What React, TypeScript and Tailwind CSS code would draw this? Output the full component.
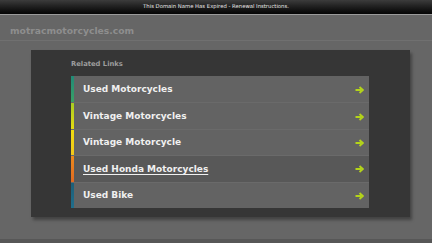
const links = [
  { label: "Used Motorcycles", bar: "bg-gradient-to-b from-[#1f8a76] to-[#3aa066]", active: false },
  { label: "Vintage Motorcycles", bar: "bg-gradient-to-b from-[#a8cc22] to-[#e6dc10]", active: false },
  { label: "Vintage Motorcycle", bar: "bg-gradient-to-b from-[#f0dc10] to-[#f2c81a]", active: false },
  { label: "Used Honda Motorcycles", bar: "bg-gradient-to-b from-[#ec8a1c] to-[#e06a22]", active: true },
  { label: "Used Bike", bar: "bg-gradient-to-b from-[#1d5f78] to-[#1f6e8c]", active: false },
];

const Arrow = () => (
  <svg width="9" height="8" viewBox="0 0 9 8" className="shrink-0">
    <path d="M0.5 4H6.5" stroke="#b4d41a" strokeWidth="2" />
    <path d="M4.5 1L7.8 4L4.5 7" stroke="#b4d41a" strokeWidth="1.8" fill="none" />
  </svg>
);

export default function App() {
  return (
    <div className="w-[432px] h-[243px] overflow-hidden bg-[#666666] font-['DejaVu_Sans',sans-serif]">
      {/* expired banner */}
      <div className="h-[15px] bg-gradient-to-b from-[#3c3c3c] to-[#050505] border-b border-[#9a9a9a] flex items-center justify-center">
        <span className="text-[5.3px] text-[#e8e8e8] leading-none">
          This Domain Name Has Expired - Renewal Instructions.
        </span>
      </div>

      {/* header */}
      <div className="h-[26px] flex items-center pl-[10px] pt-[7px] border-b border-[#707070]">
        <span className="text-[9.2px] font-bold text-[#8e8e8e]">motracmotorcycles.com</span>
      </div>

      <div className="h-[9px]" />

      {/* panel */}
      <div className="ml-[31px] w-[379px] h-[167px] bg-[#363636] shadow-[2px_3px_3px_rgba(0,0,0,0.35)] pt-[11px] pl-[40px]">
        <div className="text-[6.8px] font-bold text-[#9c9c9c] h-[15px] leading-none">Related Links</div>
        <div className="w-[298px] flex flex-col">
          {links.map((l) => (
            <div
              key={l.label}
              className={`h-[26.4px] flex items-stretch border-t border-[#6a6a6a] first:border-t-0 ${
                l.active ? "bg-[#585858]" : "bg-[#636363]"
              }`}
            >
              <div className={`w-[3px] ${l.bar}`} />
              <div className="flex-1 flex items-center justify-between pl-[9px] pr-[5px] pt-[1px]">
                <span
                  className={`text-[9px] font-bold text-[#f0f0f0] leading-none ${
                    l.active ? "underline underline-offset-2" : ""
                  }`}
                >
                  {l.label}
                </span>
                <Arrow />
              </div>
            </div>
          ))}
        </div>
      </div>

      <div className="h-[22px]" />
      <div className="h-[10px] bg-[#575757]" />
    </div>
  );
}
